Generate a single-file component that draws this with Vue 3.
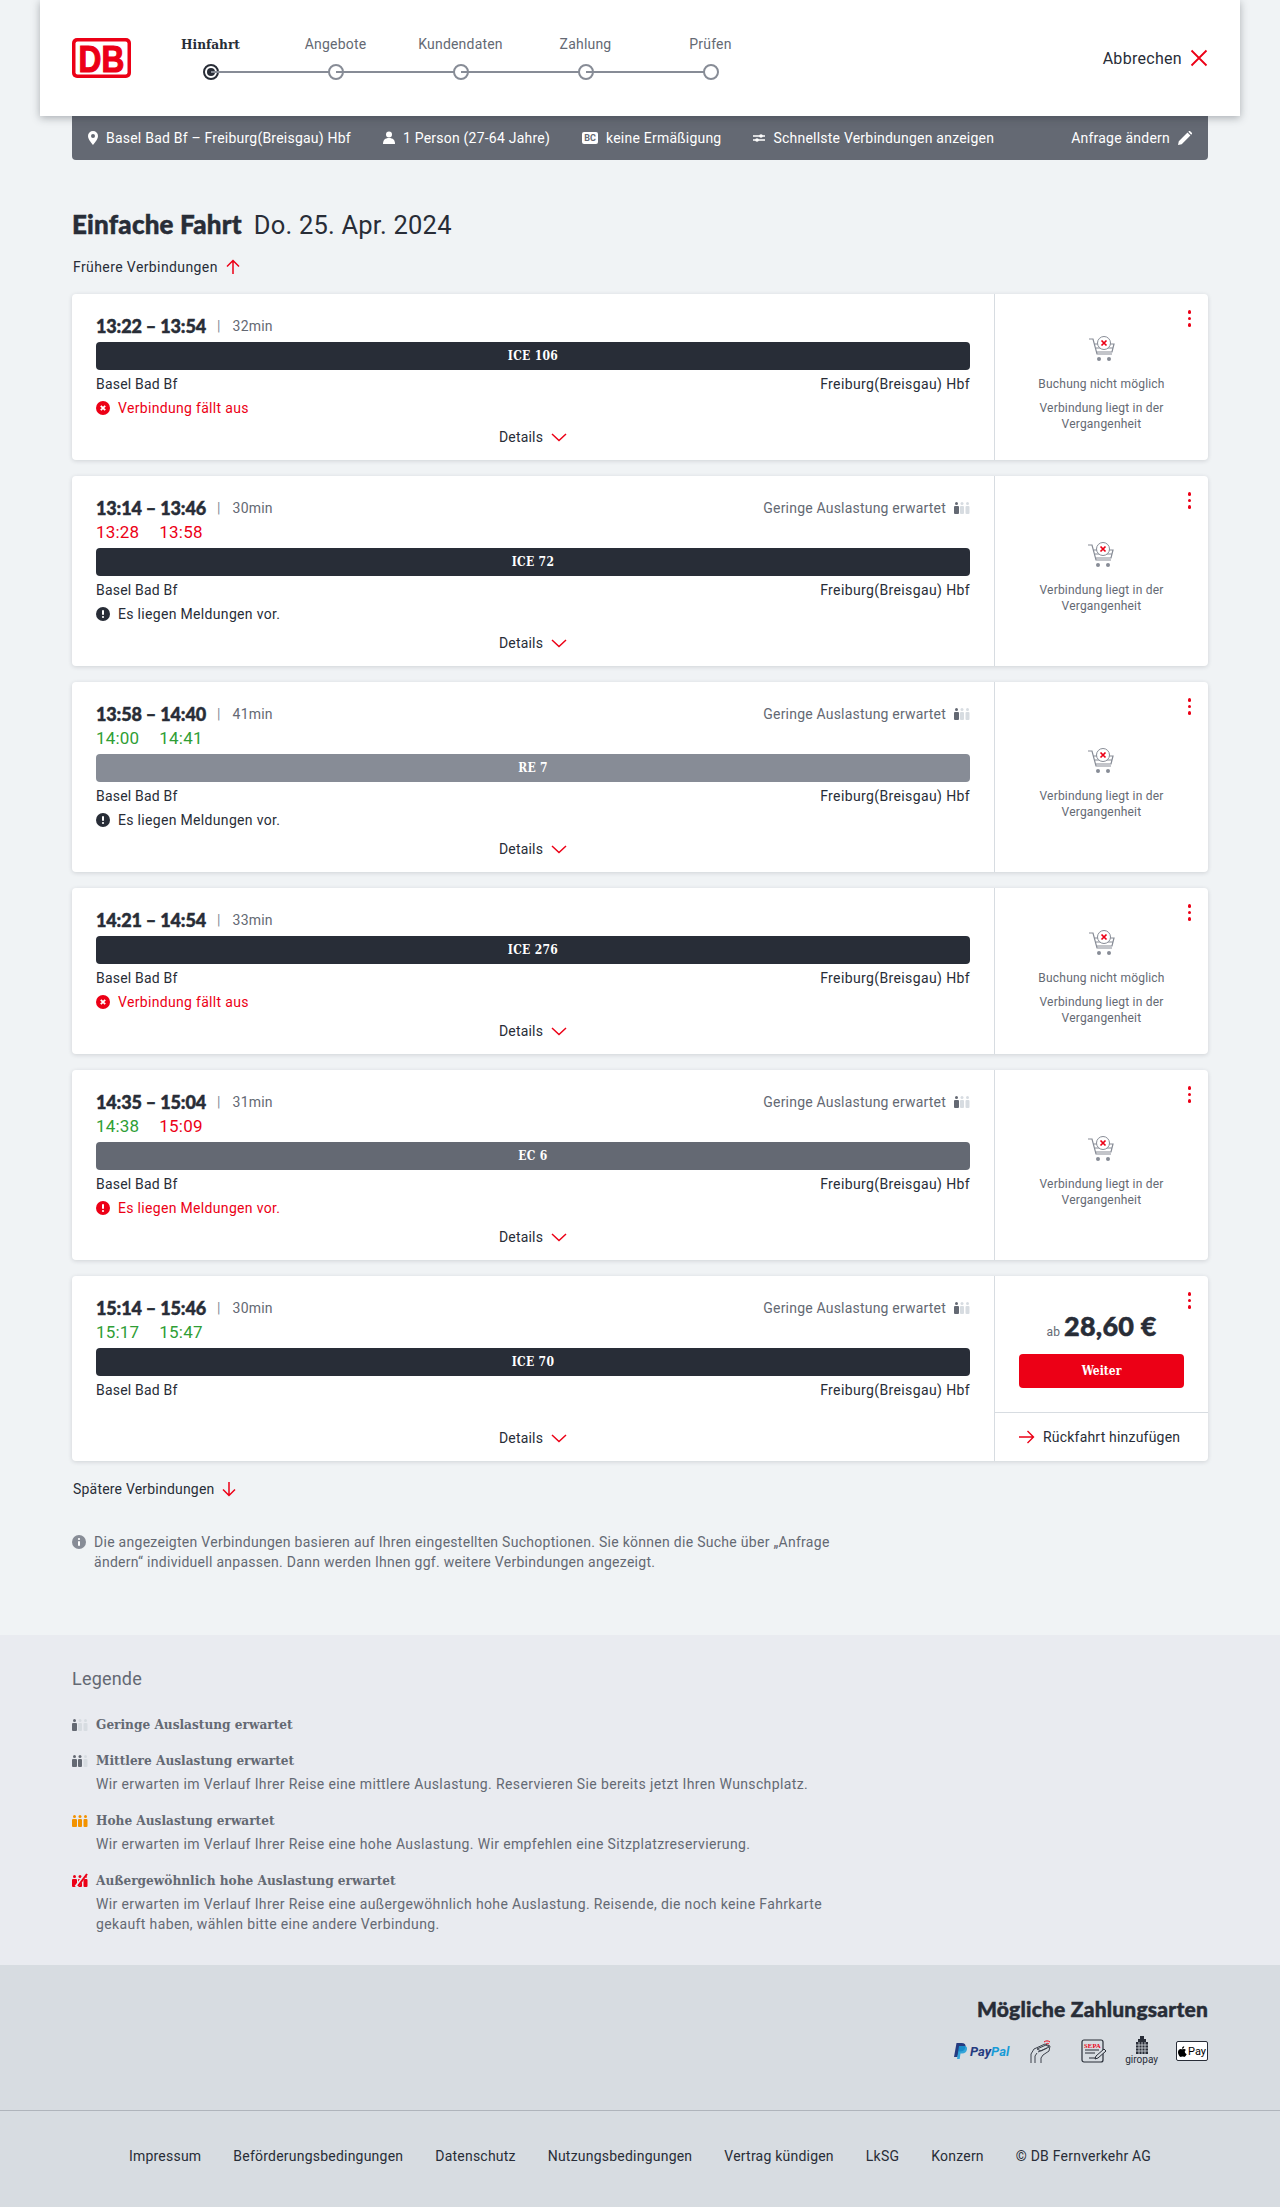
<script setup>
const steps = ['Hinfahrt', 'Angebote', 'Kundendaten', 'Zahlung', 'Prüfen'];

const trips = [
  { time: '13:22 – 13:54', dur: '32min', train: 'ICE 106', kind: 'dark', status: 'Verbindung fällt aus', statusType: 'failed', noBooking: true },
  { time: '13:14 – 13:46', dur: '30min', load: true, delay: [['13:28', 'red'], ['13:58', 'red']], train: 'ICE 72', kind: 'dark', status: 'Es liegen Meldungen vor.', statusType: 'info' },
  { time: '13:58 – 14:40', dur: '41min', load: true, delay: [['14:00', 'green'], ['14:41', 'green']], train: 'RE 7', kind: 'light', status: 'Es liegen Meldungen vor.', statusType: 'info' },
  { time: '14:21 – 14:54', dur: '33min', train: 'ICE 276', kind: 'dark', status: 'Verbindung fällt aus', statusType: 'failed', noBooking: true },
  { time: '14:35 – 15:04', dur: '31min', load: true, delay: [['14:38', 'green'], ['15:09', 'red']], train: 'EC 6', kind: 'mid', status: 'Es liegen Meldungen vor.', statusType: 'warn' },
  { time: '15:14 – 15:46', dur: '30min', load: true, delay: [['15:17', 'green'], ['15:47', 'green']], train: 'ICE 70', kind: 'dark', price: '28,60 €' },
];

const legend = [
  { title: 'Geringe Auslastung erwartet', dark: 1, color: '#646973' },
  { title: 'Mittlere Auslastung erwartet', dark: 2, color: '#646973', text: 'Wir erwarten im Verlauf Ihrer Reise eine mittlere Auslastung. Reservieren Sie bereits jetzt Ihren Wunschplatz.' },
  { title: 'Hohe Auslastung erwartet', dark: 3, color: '#f39200', text: 'Wir erwarten im Verlauf Ihrer Reise eine hohe Auslastung. Wir empfehlen eine Sitzplatzreservierung.' },
  { title: 'Außergewöhnlich hohe Auslastung erwartet', dark: 3, color: '#ec0016', slash: true, text: 'Wir erwarten im Verlauf Ihrer Reise eine außergewöhnlich hohe Auslastung. Reisende, die noch keine Fahrkarte gekauft haben, wählen bitte eine andere Verbindung.' },
];

const footerLinks = ['Impressum', 'Beförderungsbedingungen', 'Datenschutz', 'Nutzungsbedingungen', 'Vertrag kündigen', 'LkSG', 'Konzern', '© DB Fernverkehr AG'];
</script>

<template>
  <div class="page">
    <header class="head">
      <svg class="logo" width="59" height="40" viewBox="0 0 59 40">
        <rect x="0" y="0" width="59" height="40" rx="5" fill="#ec0016" />
        <rect x="3.500" y="3.500" width="52" height="33" rx="2" fill="#fff" />
        <text x="29.500" y="33.500" text-anchor="middle" textLength="46" lengthAdjust="spacingAndGlyphs" font-family="Liberation Sans" font-weight="700" font-size="37" fill="#ec0016" stroke="#ec0016" stroke-width="1.200">DB</text>
      </svg>
      <div class="stepper">
        <div v-for="(s, i) in steps" :key="s" class="step" :class="{ active: i === 0 }">
          <span class="step-label">{{ s }}</span>
          <span class="step-dot"></span>
        </div>
      </div>
      <div class="abort">
        <span>Abbrechen</span>
        <svg width="18" height="18" viewBox="0 0 18 18"><path d="M1.500 1.500l15 15M16.500 1.500l-15 15" stroke="#ec0016" stroke-width="1.800" fill="none" /></svg>
      </div>
    </header>

    <main class="main">
      <div class="summary">
        <span class="sum-item">
          <svg width="10" height="14" viewBox="0 0 10 14"><path d="M5 0a5 5 0 0 0-5 5c0 3.500 5 9 5 9s5-5.500 5-9a5 5 0 0 0-5-5zm0 7a2 2 0 1 1 0-4 2 2 0 0 1 0 4z" fill="#fff" /></svg>
          Basel Bad Bf – Freiburg(Breisgau) Hbf
        </span>
        <span class="sum-item">
          <svg width="12" height="14" viewBox="0 0 12 14"><circle cx="6" cy="3.500" r="3" fill="#fff" /><path d="M0 13c0-4 2-6 6-6s6 2 6 6z" fill="#fff" /></svg>
          1 Person (27-64 Jahre)
        </span>
        <span class="sum-item">
          <span class="bc">BC</span>
          keine Ermäßigung
        </span>
        <span class="sum-item">
          <svg width="12" height="10" viewBox="0 0 12 10"><path d="M0 3h12M0 7h12" stroke="#fff" stroke-width="1.500" /><circle cx="8" cy="3" r="1.800" fill="#fff" /><circle cx="4" cy="7" r="1.800" fill="#fff" /></svg>
          Schnellste Verbindungen anzeigen
        </span>
        <span class="sum-item edit">
          Anfrage ändern
          <svg width="14" height="14" viewBox="0 0 14 14"><path d="M0 14l.8-3.700L9.500 1.600l2.900 2.900-8.700 8.700zM10.300.8l.6-.6a1 1 0 0 1 1.300 0l1.600 1.600a1 1 0 0 1 0 1.300l-.6.6z" fill="#fff" /></svg>
        </span>
      </div>

      <h1 class="title"><b>Einfache Fahrt</b><span>Do. 25. Apr. 2024</span></h1>

      <div class="more first">
        Frühere Verbindungen
        <svg width="14" height="16" viewBox="0 0 14 16"><path d="M7 15V1.500M1 7.500l6-6 6 6" stroke="#ec0016" stroke-width="1.500" fill="none" /></svg>
      </div>

      <div class="cards">
        <article v-for="t in trips" :key="t.train" class="card">
          <div class="trip">
            <div class="time-row">
              <strong class="time">{{ t.time }}</strong>
              <span class="sep">|</span>
              <span class="dur">{{ t.dur }}</span>
              <span v-if="t.load" class="load">
                Geringe Auslastung erwartet
                <svg width="16" height="12" viewBox="0 0 16 12">
                  <g fill="#646973"><circle cx="2.500" cy="1.500" r="1.500" /><rect x="0" y="4" width="5" height="8" rx="1" /></g>
                  <g fill="#d7dce1"><circle cx="8" cy="1.500" r="1.500" /><rect x="6" y="4" width="4" height="8" rx="1" /><circle cx="13.500" cy="1.500" r="1.500" /><rect x="11.500" y="4" width="4" height="8" rx="1" /></g>
                </svg>
              </span>
            </div>
            <div v-if="t.delay" class="delay-row">
              <span v-for="d in t.delay" :key="d[0]" :class="d[1]">{{ d[0] }}</span>
            </div>
            <div class="bar" :class="t.kind">{{ t.train }}</div>
            <div class="stations"><span>Basel Bad Bf</span><span class="to">Freiburg(Breisgau) Hbf</span></div>
            <div v-if="t.status" class="status" :class="t.statusType">
              <svg width="14" height="14" viewBox="0 0 14 14">
                <circle cx="7" cy="7" r="7" fill="currentColor" />
                <path v-if="t.statusType === 'failed'" d="M4.800 4.800l4.400 4.400M9.200 4.800l-4.400 4.400" stroke="#fff" stroke-width="1.800" />
                <template v-else>
                  <rect x="6" y="3" width="2" height="5" rx="1" fill="#fff" />
                  <circle cx="7" cy="10" r="1.100" fill="#fff" />
                </template>
              </svg>
              {{ t.status }}
            </div>
            <div v-else class="status-empty"></div>
            <div class="details">
              Details
              <svg width="16" height="9" viewBox="0 0 16 9"><path d="M1 1l7 6.500L15 1" stroke="#ec0016" stroke-width="1.500" fill="none" /></svg>
            </div>
          </div>

          <div class="side" :class="{ priced: t.price }">
            <span class="kebab"><i></i><i></i><i></i></span>
            <template v-if="t.price">
              <div class="offer">
                <div class="price"><small>ab</small>{{ t.price }}</div>
                <button class="go">Weiter</button>
              </div>
              <div class="return">
                <svg width="16" height="14" viewBox="0 0 16 14"><path d="M0 7h14.500M8.500 1l6 6-6 6" stroke="#ec0016" stroke-width="1.400" fill="none" /></svg>
                Rückfahrt hinzufügen
              </div>
            </template>
            <div v-else class="past">
              <svg class="cart" width="28" height="26" viewBox="0 0 28 26">
                <path d="M1 3h4l4 15h15M6 8h20l-2 8H8M8 12h17" stroke="#878c96" stroke-width="1.200" fill="none" />
                <circle cx="11" cy="23" r="2" fill="#878c96" />
                <circle cx="21" cy="23" r="2" fill="#878c96" />
                <circle cx="16" cy="7" r="6.500" fill="#fff" stroke="#878c96" stroke-width="1" />
                <path d="M13.500 4.500l5 5M18.500 4.500l-5 5" stroke="#ec0016" stroke-width="1.700" />
              </svg>
              <p v-if="t.noBooking">Buchung nicht möglich</p>
              <p class="reason">Verbindung liegt in der<br />Vergangenheit</p>
            </div>
          </div>
        </article>
      </div>

      <div class="more last">
        Spätere Verbindungen
        <svg width="14" height="16" viewBox="0 0 14 16"><path d="M7 1v13.500M1 8.500l6 6 6-6" stroke="#ec0016" stroke-width="1.500" fill="none" /></svg>
      </div>

      <div class="note">
        <svg width="14" height="14" viewBox="0 0 14 14"><circle cx="7" cy="7" r="7" fill="#878c96" /><rect x="6" y="6" width="2" height="5" rx="1" fill="#fff" /><circle cx="7" cy="4" r="1.100" fill="#fff" /></svg>
        <p>Die angezeigten Verbindungen basieren auf Ihren eingestellten Suchoptionen. Sie können die Suche über „Anfrage ändern“ individuell anpassen. Dann werden Ihnen ggf. weitere Verbindungen angezeigt.</p>
      </div>
    </main>

    <section class="legend">
      <h2>Legende</h2>
      <div v-for="l in legend" :key="l.title" class="leg-item" :class="{ plain: !l.text }">
        <div class="leg-title">
          <svg width="16" height="14" viewBox="0 0 16 14">
            <g :fill="l.color"><circle cx="2.500" cy="3.500" r="1.500" /><rect x="0" y="6" width="5" height="8" rx="1" /></g>
            <g :fill="l.dark > 1 ? l.color : '#d7dce1'"><circle cx="8" cy="3.500" r="1.500" /><rect x="6" y="6" width="4" height="8" rx="1" /></g>
            <g :fill="l.dark > 2 ? l.color : '#d7dce1'"><circle cx="13.500" cy="3.500" r="1.500" /><rect x="11.500" y="6" width="4" height="8" rx="1" /></g>
            <path v-if="l.slash" d="M4 14L14 1" stroke="#e9ebf0" stroke-width="3.500" />
            <path v-if="l.slash" d="M6 13L15 1" :stroke="l.color" stroke-width="2" />
          </svg>
          <b>{{ l.title }}</b>
        </div>
        <p v-if="l.text">{{ l.text }}</p>
      </div>
    </section>

    <section class="pay">
      <h3>Mögliche Zahlungsarten</h3>
      <div class="pay-icons">
        <span class="paypal">
          <svg width="13" height="16" viewBox="0 0 13 16"><path d="M2.500 0h5c3 0 4.500 1.500 4 4-.5 3-2.500 4.500-5.500 4.500H4.500L3.500 14H0z" fill="#253b80" /><path d="M5 3h5c2.500 0 3.500 1.500 3 3.500-.6 2.500-2.300 4-5 4H6.500L5.700 16H3z" fill="#179bd7" opacity=".85" /></svg>
          <em>Pay</em><em class="pal">Pal</em>
        </span>
        <svg class="hand" width="24" height="25" viewBox="0 0 24 25" fill="none" stroke="#3c414b" stroke-width="1">
          <path d="M1 24v-9l3-5 11-5 5 2-1 5-6 4-2 3v5M5 24v-7l2-3" />
          <path d="M7 10l9-4 3 2-8 4zM8 13l9-4" />
          <path d="M14 3c2-1.500 4-1.500 6 0M16 5c1-.8 2-.8 3 0" stroke="#ec0016" />
        </svg>
        <svg class="sepa" width="26" height="24" viewBox="0 0 26 24" fill="none">
          <rect x="1" y="1" width="21" height="22" rx="2" stroke="#282d37" stroke-width="1.200" />
          <text x="11.500" y="8.500" text-anchor="middle" font-family="Liberation Serif" font-weight="700" font-size="6.500" fill="#ec0016">SEPA</text>
          <path d="M4 11h14M4 14h10M8 19h7" stroke="#282d37" />
          <path d="M14 20l1-3 8-7 2 2-8 7z" fill="#d7dce1" stroke="#282d37" />
        </svg>
        <span class="giro">
          <svg width="16" height="18" viewBox="0 0 16 18"><path d="M6 0h4v3H6zM4 3h8v3H4zM2 6h12v12H2z" fill="#282d37" /><path d="M2 9h12M2 12h12M2 15h12M5 6v12M8 6v12M11 6v12" stroke="#d7dce1" stroke-width=".8" /></svg>
          <span>giropay</span>
        </span>
        <span class="apple">
          <svg width="9" height="11" viewBox="0 0 9 11"><path d="M6.800 5.800c0-1.200 1-1.800 1.100-1.900-.6-.9-1.500-1-1.800-1-.8-.1-1.500.4-1.900.4s-1-.4-1.600-.4C1.700 2.900 0 3.900 0 6.300 0 8.200 1.500 11 2.800 11c.6 0 .9-.4 1.700-.4s1 .4 1.700.4c1.200 0 2.200-2.200 2.500-2.900-.1 0-1.900-.7-1.900-2.300zM5.600 2c.4-.5.600-1.100.6-1.800-.6 0-1.200.4-1.600.8-.4.400-.7 1.100-.6 1.700.6.100 1.200-.3 1.600-.7z" fill="#000" /></svg>
          Pay
        </span>
      </div>
    </section>

    <footer class="foot">
      <span v-for="f in footerLinks" :key="f">{{ f }}</span>
    </footer>
  </div>
</template>

<style>
html, body { margin: 0; background: #f0f3f5; }
</style>

<style scoped>
.page {
  width: 1280px;
  font-family: Roboto, "Noto Sans", sans-serif;
  font-size: 14px;
  color: #282d37;
  letter-spacing: 0.2px;
}
p, h1, h2, h3 { margin: 0; }

/* header */
.head {
  position: relative;
  z-index: 2;
  display: flex;
  align-items: center;
  height: 116px;
  margin: 0 40px;
  padding: 0 32px;
  box-sizing: border-box;
  background: #fff;
  box-shadow: 0 2px 8px rgba(40, 45, 55, 0.35);
}
.logo { flex: none; }
.stepper { display: flex; margin-left: 17px; padding-bottom: 2px; }
.step {
  position: relative;
  width: 125px;
  display: flex;
  flex-direction: column;
  align-items: center;
  gap: 10px;
  color: #646973;
}
.step + .step::before {
  content: '';
  position: absolute;
  left: -50%;
  right: 50%;
  bottom: 7px;
  height: 2px;
  background: #878c96;
}
.step-label { height: 20px; line-height: 20px; }
.step.active .step-label { font-family: "DejaVu Serif Condensed", "Liberation Serif", serif; font-weight: 700; color: #282d37; font-size: 13.500px; letter-spacing: 0; }
.step-dot {
  position: relative;
  width: 16px;
  height: 16px;
  box-sizing: border-box;
  border: 2px solid #878c96;
  border-radius: 50%;
  background: #fff;
}
.step.active .step-dot { border-color: #282d37; }
.step.active .step-dot::after {
  content: '';
  position: absolute;
  inset: 2px;
  border-radius: 50%;
  background: #282d37;
}
.abort {
  margin-left: auto;
  display: flex;
  align-items: center;
  gap: 8px;
  font-size: 16px;
  letter-spacing: 0.3px;
}

/* summary */
.main { width: 1136px; margin: 0 auto; }
.summary {
  display: flex;
  align-items: center;
  gap: 32px;
  height: 44px;
  padding: 0 16px;
  border-radius: 0 0 4px 4px;
  background: #646973;
  color: #fff;
  letter-spacing: 0.22px;
}
.sum-item { display: flex; align-items: center; gap: 8px; }
.bc {
  width: 16px;
  height: 12px;
  border-radius: 2px;
  background: #fff;
  color: #646973;
  font-size: 9px;
  font-weight: 700;
  line-height: 12px;
  text-align: center;
  letter-spacing: 0;
}
.edit { margin-left: auto; }
.title {
  display: flex;
  align-items: baseline;
  gap: 12px;
  margin-top: 48px;
  height: 32px;
  line-height: 32px;
  font-size: 25.500px;
  font-weight: 400;
}
.title b { font-family: Lato, Roboto, sans-serif; font-weight: 900; font-size: 26px; -webkit-text-stroke: 0.5px #282d37; }
.more { display: flex; align-items: center; gap: 8px; height: 20px; padding-left: 1px; }
.more.first { margin-top: 17px; letter-spacing: 0.4px; }
.more.last { margin-top: 18px; }

/* cards */
.cards { display: flex; flex-direction: column; gap: 16px; margin-top: 17px; }
.card {
  display: flex;
  border-radius: 4px;
  background: #fff;
  box-shadow: 0 1px 4px rgba(40, 45, 55, 0.16);
}
.trip {
  flex: 1;
  min-width: 0;
  padding: 20px 24px 13px;
  border-right: 1px solid #d7dce1;
}
.time-row { display: flex; align-items: center; height: 24px; }
.time { font-family: Lato, Roboto, sans-serif; font-weight: 900; font-size: 18px; letter-spacing: -0.15px; -webkit-text-stroke: 0.45px #282d37; }
.sep { margin: 0 12px 0 11px; color: #878c96; font-size: 14px; }
.dur { color: #646973; }
.load { margin-left: auto; display: flex; align-items: center; gap: 8px; color: #646973; }
.delay-row { display: flex; gap: 20px; height: 24px; line-height: 24px; font-size: 17px; }
.red { color: #ec0016; }
.green { color: #2f9e35; }
.bar {
  height: 28px;
  margin-top: 4px;
  border-radius: 4px;
  line-height: 28px;
  text-align: center;
  color: #fff;
  font-family: "DejaVu Serif Condensed", "Liberation Serif", serif;
  font-weight: 700;
  font-size: 12px;
  letter-spacing: 0.3px;
}
.bar.dark { background: #282d37; }
.bar.light { background: #878c96; }
.bar.mid { background: #646973; }
.stations {
  display: flex;
  justify-content: space-between;
  height: 20px;
  line-height: 20px;
  margin-top: 4px;
}
.to { letter-spacing: 0.38px; }
.status {
  display: flex;
  align-items: center;
  gap: 8px;
  height: 20px;
  margin-top: 4px;
  letter-spacing: 0.32px;
}
.status.failed, .status.warn { color: #ec0016; }
.status-empty { height: 15px; margin-top: 4px; }
.details {
  display: flex;
  align-items: center;
  justify-content: center;
  gap: 8px;
  height: 20px;
  margin-top: 9px;
}

/* right side */
.side {
  position: relative;
  flex: none;
  width: 213px;
  display: flex;
  flex-direction: column;
  align-items: center;
  justify-content: center;
  box-sizing: border-box;
  padding-top: 14px;
  color: #646973;
  font-size: 12px;
}
.side.priced { justify-content: flex-start; padding-top: 0; }
.kebab {
  position: absolute;
  top: 16px;
  right: 17px;
  display: flex;
  flex-direction: column;
  gap: 3px;
}
.kebab i { width: 3.500px; height: 3.500px; border-radius: 50%; background: #ec0016; }
.past { display: flex; flex-direction: column; align-items: center; text-align: center; }
.cart { margin-bottom: 14px; }
.past p { line-height: 16px; }
.past p + p { margin-top: 8px; }
.offer {
  width: 100%;
  height: 137px;
  box-sizing: border-box;
  padding: 32px 24px 0;
  border-bottom: 1px solid #d7dce1;
}
.price {
  display: flex;
  align-items: baseline;
  justify-content: center;
  height: 36px;
  line-height: 36px;
  font-family: Lato, Roboto, sans-serif;
  font-weight: 900;
  font-size: 27px;
  color: #282d37;
  -webkit-text-stroke: 0.5px #282d37;
}
.price small {
  margin-right: 4px;
  font-family: Roboto, sans-serif;
  font-weight: 400;
  font-size: 12px;
  color: #646973;
  -webkit-text-stroke: 0;
}
.go {
  display: block;
  width: 100%;
  height: 34px;
  margin-top: 10px;
  border: 0;
  border-radius: 4px;
  background: #ec0016;
  color: #fff;
  font-family: "DejaVu Serif Condensed", "Liberation Serif", serif;
  font-weight: 700;
  font-size: 12px;
}
.return {
  flex: 1;
  width: 100%;
  display: flex;
  align-items: center;
  gap: 8px;
  padding-left: 24px;
  box-sizing: border-box;
  font-size: 14px;
  color: #282d37;
}

/* note */
.note {
  display: flex;
  gap: 8px;
  width: 760px;
  margin-top: 33px;
  margin-bottom: 63px;
  line-height: 20px;
  color: #646973;
  letter-spacing: 0.28px;
}
.note svg { flex: none; margin-top: 3px; }

/* legend */
.legend {
  height: 330px;
  box-sizing: border-box;
  padding: 30px 72px 0;
  background: #e9ebf0;
  color: #646973;
}
.legend h2 { font-size: 18px; font-weight: 400; line-height: 28px; margin-bottom: 21px; }
.leg-item { width: 760px; margin-bottom: 16px; }
.leg-title { display: flex; align-items: center; gap: 8px; height: 20px; }
.leg-title b { font-family: "DejaVu Serif Condensed", "Liberation Serif", serif; font-size: 13.500px; letter-spacing: 0; }
.leg-item p { margin: 4px 0 0 24px; line-height: 20px; letter-spacing: 0.37px; }

/* payment */
.pay {
  height: 146px;
  box-sizing: border-box;
  padding: 29px 72px 0;
  background: #d7dce1;
  border-bottom: 1px solid #afb4bb;
}
.pay h3 {
  text-align: right;
  font-family: Lato, Roboto, sans-serif;
  font-weight: 900;
  font-size: 21px;
  line-height: 30px;
  -webkit-text-stroke: 0.45px #282d37;
}
.pay-icons { display: flex; align-items: center; justify-content: flex-end; gap: 18px; margin-top: 12px; }
.paypal { display: flex; align-items: center; gap: 3px; margin-right: 3px; font-size: 13px; font-weight: 700; color: #253b80; }
.paypal em { letter-spacing: 0; margin-left: -3px; }
.paypal .pal { color: #179bd7; }
.paypal svg { margin-right: 3px; }
.sepa { margin-left: 9px; }
.giro { display: flex; flex-direction: column; align-items: center; font-size: 10px; line-height: 12px; letter-spacing: 0; }
.apple {
  display: flex;
  align-items: center;
  justify-content: center;
  gap: 1px;
  width: 32px;
  height: 20px;
  border: 1px solid #282d37;
  border-radius: 2px;
  background: #fff;
  color: #000;
  font-size: 11px;
  letter-spacing: 0;
  box-sizing: border-box;
}

/* footer */
.foot {
  display: flex;
  align-items: center;
  justify-content: center;
  gap: 32px;
  height: 90px;
  padding-bottom: 6px;
  background: #d7dce1;
  letter-spacing: 0.22px;
}
</style>
